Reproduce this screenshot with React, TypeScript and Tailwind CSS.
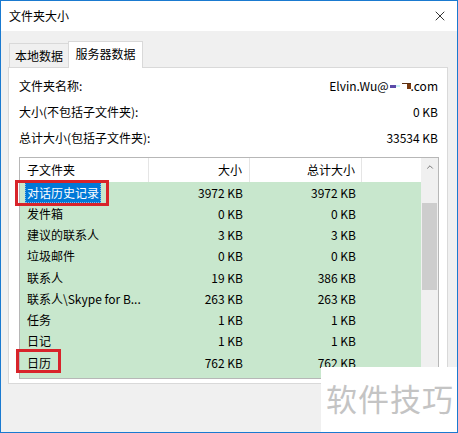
import { X, ChevronUp } from "lucide-react";

const rows = [
  { name: "对话历史记录", size: "3972 KB", total: "3972 KB" },
  { name: "发件箱", size: "0 KB", total: "0 KB" },
  { name: "建议的联系人", size: "3 KB", total: "3 KB" },
  { name: "垃圾邮件", size: "0 KB", total: "0 KB" },
  { name: "联系人", size: "19 KB", total: "386 KB" },
  { name: "联系人\\Skype for B...", size: "263 KB", total: "263 KB" },
  { name: "任务", size: "1 KB", total: "1 KB" },
  { name: "日记", size: "1 KB", total: "1 KB" },
  { name: "日历", size: "762 KB", total: "762 KB" },
];

const font = { fontFamily: '"Microsoft YaHei UI", "Noto Sans CJK SC", sans-serif' };

export default function App() {
  return (
    <div
      className="relative w-[458px] h-[433px] border border-[#1a7ad0] bg-[#f0f0f0] flex flex-col text-[12px] text-black overflow-hidden"
      style={font}
    >
      {/* title bar */}
      <div className="h-[30px] bg-white flex items-center justify-between pl-[8px] pr-[8px] shrink-0">
        <span>文件夹大小</span>
        <X size={16} strokeWidth={1.2} className="mr-[1px]" />
      </div>

      {/* tabs */}
      <div className="flex items-end h-[36px] pl-[8px] shrink-0">
        <div className="h-[24px] w-[60px] border border-b-0 border-[#d9d9d9] bg-[#f0f0f0] flex items-center justify-center mb-0">
          本地数据
        </div>
        <div className="relative z-10 h-[27px] w-[75px] -ml-[1px] border border-b-0 border-[#d9d9d9] bg-white flex items-start justify-center pt-[3px] -mb-[1px]">
          服务器数据
        </div>
      </div>

      {/* tab panel */}
      <div className="ml-[7px] w-[440px] h-[317px] border border-[#d9d9d9] bg-white pt-[5px] pl-[10px] pr-[9px] flex flex-col">
        <div className="h-[26px] flex items-center justify-between">
          <span>文件夹名称:</span>
          <span className="flex items-center">
            Elvin.Wu@
            <span className="inline-block w-[6px] h-[3px] bg-[#5b4aa8] ml-[1px]" />
            <span className="inline-block w-[4px] h-[2px] bg-[#c8f0f4]" />
            <span className="inline-flex flex-col items-end w-[10px] ml-[1px] mr-[0px]">
              <span className="w-[9px] h-[1px] bg-[#5a2d10]" />
              <span className="w-[4px] h-[5px] bg-[#7a3a10]" />
            </span>
            .com
          </span>
        </div>
        <div className="h-[26px] flex items-center justify-between">
          <span>大小(不包括子文件夹):</span>
          <span>0 KB</span>
        </div>
        <div className="h-[26px] flex items-center justify-between">
          <span>总计大小(包括子文件夹):</span>
          <span>33534 KB</span>
        </div>

        {/* list view */}
        <div className="mt-[6px] w-[420px] h-[222px] border border-[#b7b7b7] flex">
          <div className="flex-1 flex flex-col">
            <div className="h-[24px] flex bg-white shrink-0">
              <div className="w-[129px] pl-[7px] flex items-center border-r border-[#e5e5e5]">子文件夹</div>
              <div className="w-[101px] pr-[7px] flex items-center justify-end border-r border-[#e5e5e5]">大小</div>
              <div className="w-[112px] pr-[6px] flex items-center justify-end border-r border-[#e5e5e5]">总计大小</div>
              <div className="flex-1" />
            </div>
            <div className="flex-1 bg-[#c8e7cd] flex flex-col">
              {rows.map((r, i) => (
                <div key={r.name} className="h-[21.25px] flex items-center">
                  <div className="w-[129px] pl-[5px] flex items-center">
                    <span
                      className={
                        i === 0
                          ? "bg-[#0078d7] text-white px-[2px] h-[21px] flex items-center outline-1 outline-dotted outline-[#7fb8ea] -outline-offset-1"
                          : "px-[2px]"
                      }
                    >
                      {r.name}
                    </span>
                  </div>
                  <div className="w-[101px] pr-[7px] text-right">{r.size}</div>
                  <div className="w-[112px] pr-[6px] text-right">{r.total}</div>
                  <div className="flex-1" />
                </div>
              ))}
            </div>
          </div>
          {/* scrollbar */}
          <div className="w-[17px] bg-[#f0f0f0] flex flex-col items-center">
            <div className="h-[17px] flex items-center justify-center text-[#606060]">
              <ChevronUp size={10} strokeWidth={2} />
            </div>
            <div className="mt-[28px] w-[15px] h-[87px] bg-[#cdcdcd]" />
          </div>
        </div>
      </div>

      {/* red annotation boxes */}
      <div className="absolute left-[14px] top-[179px] w-[94px] h-[26px] border-[3px] border-[#d8232a]" />
      <div className="absolute left-[15px] top-[348px] w-[45px] h-[24px] border-[3px] border-[#d8232a]" />

      {/* watermark */}
      <div className="absolute left-[320px] top-[366px] w-[138px] h-[67px] bg-white flex items-center justify-center">
        <span className="text-[31px] text-[#c4c4c4] tracking-[1px] -mt-[4px]">软件技巧</span>
      </div>
    </div>
  );
}
